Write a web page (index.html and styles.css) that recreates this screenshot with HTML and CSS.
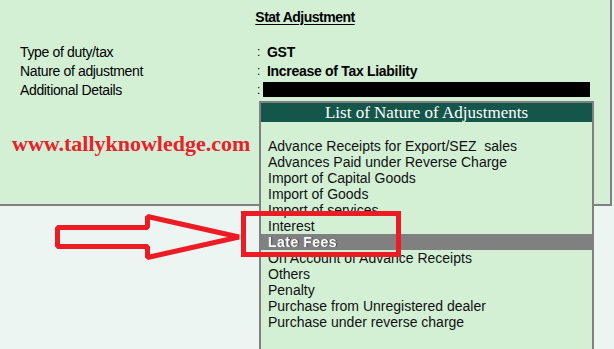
FILE: index.html
```html
<!DOCTYPE html>
<html lang="en">
<head>
    <meta charset="UTF-8">
    <meta name="viewport" content="width=device-width, initial-scale=1.0">
    <title>Stat Adjustment</title>
    <link rel="stylesheet" href="styles.css">
</head>
<body>
    <div class="panel">
        <h1 class="title">Stat Adjustment</h1>
        <div class="fields">
            <div class="label">Type of duty/tax</div>
            <div class="colon">:</div>
            <div class="value">GST</div>

            <div class="label">Nature of adjustment</div>
            <div class="colon">:</div>
            <div class="value">Increase of Tax Liability</div>

            <div class="label">Additional Details</div>
            <div class="colon">:</div>
            <div class="value"><span class="redacted"></span></div>
        </div>
        <div class="site">www.tallyknowledge.com</div>
    </div>

    <div class="popup">
        <div class="popup-head">List of Nature of Adjustments</div>
        <ul class="popup-list">
            <li>Advance Receipts for Export/SEZ  sales</li>
            <li>Advances Paid under Reverse Charge</li>
            <li>Import of Capital Goods</li>
            <li>Import of Goods</li>
            <li>Import of services</li>
            <li>Interest</li>
            <li class="selected">Late Fees</li>
            <li>On Account of Advance Receipts</li>
            <li>Others</li>
            <li>Penalty</li>
            <li>Purchase from Unregistered dealer</li>
            <li>Purchase under reverse charge</li>
        </ul>
    </div>

    <!-- annotation drawn over the screenshot -->
    <svg class="marks" xmlns="http://www.w3.org/2000/svg" width="614" height="349" viewBox="0 0 614 349">
        <polygon points="57.5,227.5 147.5,227.5 147.5,216.5 239,237 147.5,257.5 147.5,246.5 57.5,246.5"
                 fill="none" stroke="#ed1c24" stroke-width="5" stroke-linejoin="bevel"/>
        <rect x="243.5" y="213.5" width="155" height="41" fill="none" stroke="#ed1c24" stroke-width="5"/>
    </svg>
</body>
</html>
```

FILE: styles.css
```css
body {
    margin: 0;
    background-color: #edf5f3;
    font-family: 'Liberation Sans', Arial, sans-serif;
    color: #000;
    position: relative;
    width: 614px;
    height: 349px;
    overflow: hidden;
}

.panel {
    box-sizing: border-box;
    width: 612px;
    height: 206px;
    background-color: #d3f0d5;
    border-right: 2px solid #808080;
    border-bottom: 2px solid #808080;
    padding-top: 8px;
}

.title {
    margin: 0;
    font-size: 14px;
    line-height: 19px;
    font-weight: bold;
    letter-spacing: -0.5px;
    text-align: center;
    text-decoration: underline;
    text-underline-offset: 2px;
}

.fields {
    display: grid;
    grid-template-columns: 237px 10px 1fr;
    grid-auto-rows: 19px;
    margin-top: 16px;
    padding-left: 20px;
    font-size: 14px;
    line-height: 19px;
    letter-spacing: -0.35px;
}

.colon {
    font-size: 12px;
}

.value {
    font-weight: bold;
    letter-spacing: -0.3px;
}

.redacted {
    display: block;
    width: 327px;
    height: 15px;
    margin-top: 1px;
    margin-left: -4px;
    background-color: #000;
}

.site {
    margin-top: 31px;
    padding-left: 12px;
    font-family: 'Liberation Serif', 'Times New Roman', serif;
    font-size: 22px;
    line-height: 26px;
    font-weight: bold;
    color: #e8212b;
}

.popup {
    position: absolute;
    left: 259px;
    top: 101px;
    box-sizing: border-box;
    width: 335px;
    height: 260px;
    background-color: #d3f0d5;
    border: 2px solid #808080;
    border-bottom: none;
}

.popup-head {
    height: 19px;
    background-color: #14574a;
    color: #fff;
    font-family: 'Liberation Serif', 'Times New Roman', serif;
    font-size: 17px;
    line-height: 19px;
    text-align: center;
}

.popup-list {
    list-style: none;
    margin: 0;
    padding: 16px 0 0 0;
    font-size: 14px;
    line-height: 16px;
}

.popup-list li {
    padding-left: 7px;
    white-space: pre;
    color: #111;
}

.popup-list li.selected {
    background-color: #808080;
    color: #fff;
    font-weight: bold;
    letter-spacing: 0.5px;
    text-shadow: 1px 0 0 #333;
}

.marks {
    position: absolute;
    left: 0;
    top: 0;
    pointer-events: none;
}
```
